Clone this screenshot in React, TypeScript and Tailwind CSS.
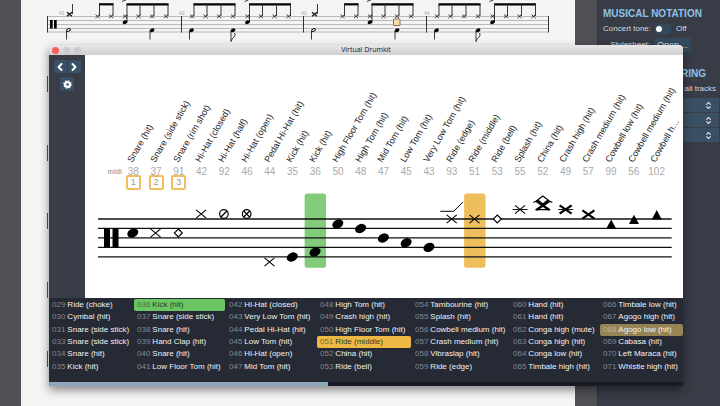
import { ChevronLeft, ChevronRight, ChevronsUpDown } from "lucide-react";
import clsx from "clsx";

type Head =
  | "note"
  | "cross"
  | "boldCross"
  | "diamond"
  | "slashCircle"
  | "crossCircle"
  | "triangle"
  | "china";

interface Drum {
  name: string;
  midi: number;
  head: Head;
  y: number;
  key?: number;
  ledger?: boolean;
  choke?: boolean;
  highlight?: string;
}

const drums: Drum[] = [
  { name: "Snare (hit)", midi: 38, head: "note", y: 43, key: 1 },
  { name: "Snare (side stick)", midi: 37, head: "cross", y: 43, key: 2 },
  { name: "Snare (rim shot)", midi: 91, head: "diamond", y: 43, key: 3 },
  { name: "Hi-Hat (closed)", midi: 42, head: "cross", y: 24 },
  { name: "Hi-Hat (half)", midi: 92, head: "slashCircle", y: 24 },
  { name: "Hi-Hat (open)", midi: 46, head: "crossCircle", y: 24 },
  { name: "Pedal Hi-Hat (hit)", midi: 44, head: "cross", y: 72 },
  { name: "Kick (hit)", midi: 35, head: "note", y: 67 },
  { name: "Kick (hit)", midi: 36, head: "note", y: 62, highlight: "#82cb7b" },
  { name: "High Floor Tom (hit)", midi: 50, head: "note", y: 34 },
  { name: "High Tom (hit)", midi: 48, head: "note", y: 38.5 },
  { name: "Mid Tom (hit)", midi: 47, head: "note", y: 48 },
  { name: "Low Tom (hit)", midi: 45, head: "note", y: 52.8 },
  { name: "Very Low Tom (hit)", midi: 43, head: "note", y: 57.4 },
  { name: "Ride (edge)", midi: 93, head: "cross", y: 29, choke: true },
  { name: "Ride (middle)", midi: 51, head: "cross", y: 29, highlight: "#efbe5c" },
  { name: "Ride (bell)", midi: 53, head: "diamond", y: 29 },
  { name: "Splash (hit)", midi: 55, head: "cross", y: 19.5, ledger: true },
  { name: "China (hit)", midi: 52, head: "china", y: 15 },
  { name: "Crash high (hit)", midi: 49, head: "boldCross", y: 19.5, ledger: true },
  { name: "Crash medium (hit)", midi: 57, head: "boldCross", y: 24.5 },
  { name: "Cowbell low (hit)", midi: 99, head: "triangle", y: 34 },
  { name: "Cowbell medium (hit)", midi: 56, head: "triangle", y: 29.3 },
  { name: "Cowbell h…", midi: 102, head: "triangle", y: 24.6 },
];

const sounds = [
  "029 Ride (choke)",
  "030 Cymbal (hit)",
  "031 Snare (side stick)",
  "033 Snare (side stick)",
  "034 Snare (hit)",
  "035 Kick (hit)",
  "036 Kick (hit)",
  "037 Snare (side stick)",
  "038 Snare (hit)",
  "039 Hand Clap (hit)",
  "040 Snare (hit)",
  "041 Low Floor Tom (hit)",
  "042 Hi-Hat (closed)",
  "043 Very Low Tom (hit)",
  "044 Pedal Hi-Hat (hit)",
  "045 Low Tom (hit)",
  "046 Hi-Hat (open)",
  "047 Mid Tom (hit)",
  "048 High Tom (hit)",
  "049 Crash high (hit)",
  "050 High Floor Tom (hit)",
  "051 Ride (middle)",
  "052 China (hit)",
  "053 Ride (bell)",
  "054 Tambourine (hit)",
  "055 Splash (hit)",
  "056 Cowbell medium (hit)",
  "057 Crash medium (hit)",
  "058 Vibraslap (hit)",
  "059 Ride (edge)",
  "060 Hand (hit)",
  "061 Hand (hit)",
  "062 Conga high (mute)",
  "063 Conga high (hit)",
  "064 Conga low (hit)",
  "065 Timbale high (hit)",
  "066 Timbale low (hit)",
  "067 Agogo high (hit)",
  "068 Agogo low (hit)",
  "069 Cabasa (hit)",
  "070 Left Maraca (hit)",
  "071 Whistle high (hit)",
];

function SmallCross({ x, y, bold }: { x: number; y: number; bold?: boolean }) {
  return (
    <path
      d={bold ? `M${x - 2.5} ${y - 2}l5 4m0 -4l-5 4` : `M${x - 2} ${y - 1.8}l4 3.6m0 -3.6l-4 3.6`}
      stroke="#111"
      strokeWidth={bold ? 1.3 : 0.8}
    />
  );
}

function Beam({ stems }: { stems: number[] }) {
  return (
    <>
      <path
        d={`M${stems[0] - 0.5} 4.3H${stems[stems.length - 1] + 0.5}`}
        stroke="#000"
        strokeWidth="2.2"
      />
      {stems.map((x) => (
        <path key={x} d={`M${x} 4V16`} stroke="#222" strokeWidth="0.9" />
      ))}
    </>
  );
}

function SmallNote({ x, y, hollow }: { x: number; y: number; hollow?: boolean }) {
  return (
    <ellipse
      cx={x}
      cy={y}
      rx={hollow ? 2 : 2.5}
      ry={hollow ? 1.2 : 1.8}
      transform={`rotate(-25 ${x} ${y})`}
      fill={hollow ? "#f4f4f4" : "#000"}
      stroke={hollow ? "#000" : "none"}
      strokeWidth="0.9"
    />
  );
}

// Second half of every bar is the same figure: accented snare then three hats
function SnareGroup({ x }: { x: number }) {
  return (
    <>
      <path d={`M${x - 3} 1.5l4 -1.6`} stroke="#222" strokeWidth="0.9" />
      <Beam stems={[x + 2, x + 15, x + 29, x + 43]} />
      <path d={`M${x + 2} 15V22`} stroke="#222" strokeWidth="0.9" />
      {[0, 13.5, 27, 41].map((dx) => (
        <SmallCross key={dx} x={x + dx} y={16.3} />
      ))}
      <SmallNote x={x} y={22.2} />
    </>
  );
}

function OddBar({ x }: { x: number }) {
  return (
    <>
      <SmallCross x={x + 22} y={14.3} bold />
      <path d={`M${x + 25} 4V14`} stroke="#222" strokeWidth="0.9" />
      <Beam stems={[x + 52, x + 65.5]} />
      <SmallCross x={x + 50} y={16.3} />
      <SmallCross x={x + 63.5} y={16.3} />
      <SnareGroup x={x + 77.5} />
      <SmallNote x={x + 21} y={30} hollow />
      <SmallNote x={x + 104.5} y={30.3} />
      <path
        d={`M${x + 19} 31V39.5M${x + 102.5} 31V39.5`}
        stroke="#222"
        strokeWidth="0.9"
      />
    </>
  );
}

function EvenBar({ x }: { x: number }) {
  return (
    <>
      <Beam stems={[x + 12.5, x + 25.5, x + 39.5, x + 53.5]} />
      {[10.5, 24, 37.5, 51.5].map((dx) => (
        <SmallCross key={dx} x={x + dx} y={16.3} />
      ))}
      <SnareGroup x={x + 66} />
      <SmallNote x={x + 10} y={30.3} />
      <SmallNote x={x + 51.5} y={30.3} />
      <path
        d={`M${x + 8} 31V39.5M${x + 49.5} 31V41.5q1 -3 3 -4.5q2 -2 0.5 -4`}
        fill="none"
        stroke="#222"
        strokeWidth="0.9"
      />
    </>
  );
}

function Score() {
  return (
    <svg viewBox="0 0 554 406" className="block w-full" aria-label="Score">
      {[16.5, 20.5, 24.5, 28.5, 32].map((y) => (
        <path key={y} d={`M26.5 ${y}H527.5`} stroke="#aaa" strokeWidth="0.8" />
      ))}
      {[26.5, 160.5, 282.5, 405.5, 527.5].map((x) => (
        <path key={x} d={`M${x} 16V32.5`} stroke="#333" />
      ))}
      <path d="M29 20h2.7v8.5H29zM33 20h2.7v8.5H33z" />
      {[38, 158, 280, 403].map((x, i) => (
        <text
          key={x}
          x={x}
          y="14.5"
          fill="#aaa"
          className="font-['Liberation_Sans'] text-[5px]"
        >
          {41 + i}
        </text>
      ))}
      <OddBar x={26.5} />
      <EvenBar x={160.5} />
      <OddBar x={271.5} />
      <EvenBar x={405.5} />
      {/* playback position */}
      <rect
        x="372.5"
        y="19"
        width="6.5"
        height="6.5"
        rx="0.5"
        fill="#fbdcaa"
        stroke="#6b6255"
        strokeWidth="0.9"
      />
      {[76, 145, 213, 282, 351].map((y) => (
        <path key={y} d={`M26.5 ${y}v16`} stroke="#555" />
      ))}
    </svg>
  );
}

function NoteHead({ head, x, y }: { head: Head; x: number; y: number }) {
  const cross = `M${x - 5} ${y - 4.2}l10 8.4m0 -8.4l-10 8.4`;
  switch (head) {
    case "note":
      return (
        <ellipse
          cx={x}
          cy={y}
          rx="5.8"
          ry="4.3"
          transform={`rotate(-28 ${x} ${y})`}
        />
      );
    case "cross":
      return <path d={cross} stroke="#000" strokeWidth="1.1" />;
    case "boldCross":
      return (
        <path
          d={`M${x - 6} ${y - 4.2}l12 8.4m0 -8.4l-12 8.4`}
          stroke="#000"
          strokeWidth="2.2"
        />
      );
    case "diamond":
      return (
        <path
          d={`M${x} ${y - 4}l4 4l-4 4l-4 -4z`}
          fill="#fff"
          stroke="#000"
          strokeWidth="1.1"
        />
      );
    case "slashCircle":
      return (
        <>
          <circle cx={x} cy={y} r="4.3" fill="none" stroke="#000" strokeWidth="1.2" />
          <path d={`M${x - 3} ${y + 3}l6 -6`} stroke="#000" strokeWidth="1.3" />
        </>
      );
    case "crossCircle":
      return (
        <>
          <circle cx={x} cy={y} r="4.3" fill="none" stroke="#000" strokeWidth="1.2" />
          <path d={`M${x - 3} ${y - 3}l6 6m0 -6l-6 6`} stroke="#000" strokeWidth="1.2" />
        </>
      );
    case "triangle":
      return <path d={`M${x} ${y - 4.5}l5 9.3h-10z`} />;
    case "china":
      return (
        <>
          <path
            d={`M${x - 6.5} ${y - 4}l13 9m0 -9l-13 9`}
            stroke="#000"
            strokeWidth="2.4"
          />
          <path
            d={`M${x - 9.5} ${y - 2.5}l3 -1.5l6.5 -5l6.5 5l3 1.5M${x - 5} ${y - 5}l5 4l5 -4M${x - 7.5} ${y + 4.7}h15`}
            fill="none"
            stroke="#000"
            strokeWidth="1.2"
          />
        </>
      );
  }
}

function DrumStaff() {
  return (
    <svg viewBox="0 0 598 108" className="block w-full" aria-label="Drum staff">
      {drums.map((d, i) =>
        d.highlight ? (
          <rect
            key={d.midi}
            x={37.4 + i * 22.78}
            y="3.5"
            width="21.4"
            height="74.2"
            rx="2.5"
            fill={d.highlight}
          />
        ) : null
      )}
      {[29, 38.4, 47.9, 57.3, 66.8].map((y) => (
        <path key={y} d={`M13 ${y}H586.7`} stroke="#111" strokeWidth="1.3" />
      ))}
      <path d="M19 38.4h6v19h-6zM27.5 38.4h6v19h-6z" />
      {drums.map((d, i) => {
        const x = 47.8 + i * 22.78;
        return (
          <g key={d.midi}>
            {d.ledger && (
              <path d={`M${x - 7.5} ${d.y}h15`} stroke="#000" strokeWidth="0.9" />
            )}
            {d.choke && (
              <path
                d={`M${x - 11.5} ${d.y - 7.7}h13.5l9 -9`}
                fill="none"
                stroke="#000"
                strokeWidth="1"
              />
            )}
            <NoteHead head={d.head} x={x} y={d.y} />
          </g>
        );
      })}
    </svg>
  );
}

function Sidebar() {
  return (
    <aside className="w-[123px] shrink-0 border-l border-[#30343d] bg-[#383c46] pl-[5px] text-[8px] leading-3 text-[#d5d9df]">
      <h2 className="mt-2 whitespace-nowrap text-[10px] font-bold leading-3 text-[#8fc1e8]">
        MUSICAL NOTATION
      </h2>
      <div className="mt-[3px] grid grid-cols-[47px_auto] items-center justify-start gap-x-1">
        <label htmlFor="concert" className="whitespace-nowrap text-right">
          Concert tone:
        </label>
        <span className="flex items-center gap-1">
          <span className="flex h-[10px] w-[18px] items-center rounded-full bg-[#34495e] pl-[2px]">
            <input
              id="concert"
              type="checkbox"
              className="size-[6px] appearance-none rounded-full bg-white"
            />
          </span>
          Off
        </span>
        <label htmlFor="stylesheet" className="mt-[3px] text-right">
          Stylesheet:
        </label>
        <button
          id="stylesheet"
          className="mt-[3px] h-[14px] w-[37px] rounded-xs bg-[#34495e] text-[9px] leading-3"
        >
          Open…
        </button>
      </div>
      <h2 className="mt-4 pr-[14px] text-right text-[10px] font-bold leading-3 text-[#8fc1e8]">
        RING
      </h2>
      <p className="mt-[3px] pr-1 text-right">all tracks</p>
      <div className="mt-[3px] flex flex-col gap-px pr-px">
        {["Staff", "Voice", "Layout"].map((name) => (
          <div key={name} className="grid h-[14px] bg-[#3a4f63]">
            <select
              aria-label={name}
              className="col-start-1 row-start-1 appearance-none bg-transparent"
            />
            <ChevronsUpDown
              className="col-start-1 row-start-1 mr-[6px] size-[9px] self-center justify-self-end"
              strokeWidth={3}
            />
          </div>
        ))}
      </div>
    </aside>
  );
}

function Gear() {
  return (
    <svg viewBox="0 0 24 24" className="size-[9px]" fill="none" stroke="#fff">
      <circle cx="12" cy="12" r="6.5" strokeWidth="6" />
      <circle cx="12" cy="12" r="10" strokeWidth="3" strokeDasharray="3.9 3.95" />
    </svg>
  );
}

function SoundList() {
  return (
    <div className="bg-[#262a35] pb-[9px] pt-px">
      <ul className="grid h-[74px] grid-flow-col grid-cols-[85fr_92fr_91fr_95fr_98fr_90fr_83fr] grid-rows-6 text-[8px] leading-3">
        {sounds.map((sound) => {
          const id = sound.slice(0, 3);
          const lit = id === "036" || id === "051";
          return (
            <li
              key={id}
              className={clsx(
                "flex gap-[2px] whitespace-nowrap rounded-xs pl-[3px]",
                lit ? "text-[#2c3a2b]" : "text-[#f0f1f3]",
                id === "036" && "mr-px bg-[#6bc563]",
                id === "051" && "mr-px bg-[#edb945]",
                id === "068" && "bg-[#968455]"
              )}
            >
              <span
                className={clsx(
                  lit ? "opacity-60" : id === "068" ? "text-[#c2b794]" : "text-[#858891]"
                )}
              >
                {id}
              </span>
              {sound.slice(4)}
            </li>
          );
        })}
      </ul>
    </div>
  );
}

function DrumkitWindow() {
  return (
    <section className="absolute left-[49px] right-[37px] top-[45px] overflow-hidden rounded-t rounded-b-xs shadow-[0_4px_10px_rgba(0,0,0,0.45)]">
      <header className="flex h-[10px] items-center bg-linear-to-b from-[#e9e8e9] to-[#cfcdd0] px-[3px]">
        <div className="flex flex-1 gap-1">
          <button aria-label="Close" className="size-[7px] rounded-full bg-[#fc5b57]" />
          <button aria-label="Minimize" className="size-[7px] rounded-full bg-[#cbcacc]" />
          <button aria-label="Zoom" className="size-[7px] rounded-full bg-[#cbcacc]" />
        </div>
        <h1 className="font-['Open_Sans',sans-serif] text-[7px] leading-[10px] text-[#222]">
          Virtual Drumkit
        </h1>
        <div className="flex-1" />
      </header>

      <div className="flex">
        <nav className="flex w-9 shrink-0 flex-col items-center gap-1 bg-[#393d48] pt-[5px] text-white">
          <div className="flex gap-px">
            <button
              aria-label="Previous"
              className="flex size-[13px] items-center justify-center rounded-l-xs bg-[#3a5067]"
            >
              <ChevronLeft className="size-3" strokeWidth={4} />
            </button>
            <button
              aria-label="Next"
              className="flex size-[13px] items-center justify-center rounded-r-xs bg-[#3a5067]"
            >
              <ChevronRight className="size-3" strokeWidth={4} />
            </button>
          </div>
          <button
            aria-label="Settings"
            className="flex size-[14px] items-center justify-center rounded-xs bg-[#3a5067]"
          >
            <Gear />
          </button>
        </nav>

        <div className="min-w-0 flex-1 bg-white">
          <div className="flex pr-[15px]">
            <span className="w-[37px] shrink-0 self-end pb-[13px] text-right text-[7px] font-bold leading-[10px] text-[#aaa]">
              midi
            </span>
            {drums.map((d) => (
              <div key={d.midi} className="flex min-w-0 flex-1 flex-col items-center">
                <div className="flex h-[112px] w-full items-end pb-[3px]">
                  <span className="ml-3 origin-bottom-left -rotate-60 whitespace-nowrap text-[9px] leading-[9px] text-[#222]">
                    {d.name}
                  </span>
                </div>
                <span className="h-[10px] text-[10px] leading-[10px] text-[#aaa]">
                  {d.midi}
                </span>
                {d.key ? (
                  <button className="-mt-[2px] h-[15px] w-[15px] rounded-xs border-2 border-[#f0bd5c] bg-white text-[9px] leading-[11px] text-[#999]">
                    {d.key}
                  </button>
                ) : (
                  <span className="h-[13px]" />
                )}
              </div>
            ))}
          </div>
          <DrumStaff />
        </div>
      </div>

      <SoundList />
      <div className="h-1 bg-[#191b24]">
        <div className="h-full w-[44%] bg-[#90a8be]" />
      </div>
    </section>
  );
}

export default function App() {
  return (
    <main className="relative flex h-screen overflow-hidden bg-[#505156] font-['Liberation_Sans',Arial,sans-serif]">
      <div className="w-[21px] shrink-0" />
      <div className="min-w-0 flex-1 bg-[#f4f4f4]">
        <Score />
      </div>
      <div className="w-[22px] shrink-0" />
      <Sidebar />
      <DrumkitWindow />
    </main>
  );
}
